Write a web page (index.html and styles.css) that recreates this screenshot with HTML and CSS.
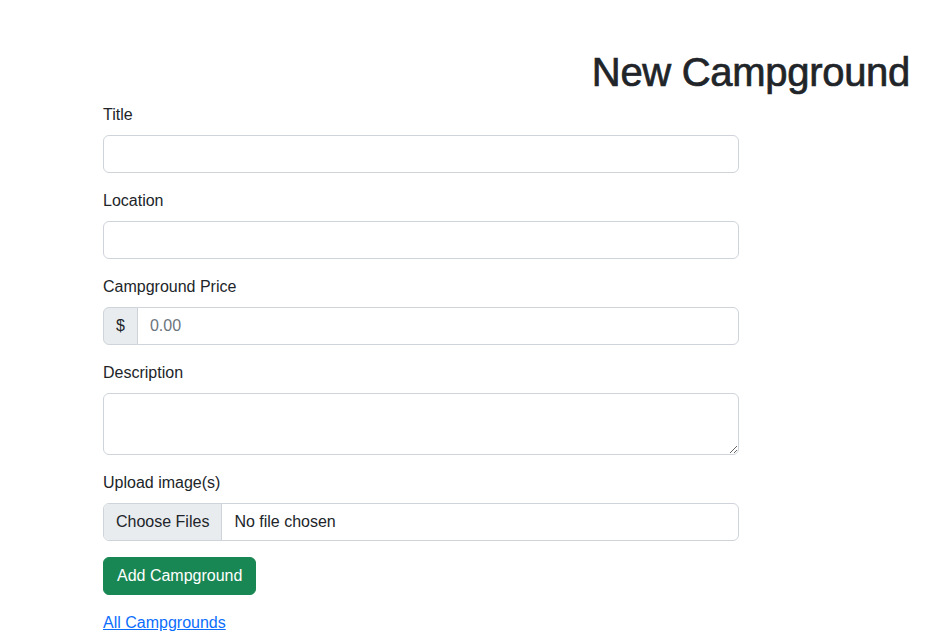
FILE: index.html
```html
<!DOCTYPE html>
<html lang="en">
<head>
<meta charset="utf-8">
<title>New Campground</title>
<link rel="stylesheet" href="styles.css">
</head>
<body>
<main class="page">
  <h1 class="page-title">New Campground</h1>
  <form class="camp-form">
    <div class="field">
      <label class="field-label" for="title">Title</label>
      <input class="control" type="text" id="title">
    </div>
    <div class="field">
      <label class="field-label" for="location">Location</label>
      <input class="control" type="text" id="location">
    </div>
    <div class="field">
      <label class="field-label" for="price">Campground Price</label>
      <div class="input-group">
        <span class="addon">$</span>
        <input class="control group-control" type="text" id="price" placeholder="0.00">
      </div>
    </div>
    <div class="field">
      <label class="field-label" for="description">Description</label>
      <textarea class="control textarea" id="description" rows="2"></textarea>
    </div>
    <div class="field">
      <label class="field-label" for="image">Upload image(s)</label>
      <label class="file-control" for="image">
        <span class="file-btn">Choose Files</span>
        <span class="file-name">No file chosen</span>
      </label>
    </div>
    <div class="actions">
      <button class="btn-success" type="button">Add Campground</button>
    </div>
  </form>
  <div class="back">
    <a class="back-link" href="#">All Campgrounds</a>
  </div>
</main>
</body>
</html>
```

FILE: styles.css
```css
* { box-sizing: border-box; }

html, body {
  margin: 0;
  padding: 0;
  background: #fff;
}

body {
  font-family: "Liberation Sans", Arial, sans-serif;
  font-size: 16px;
  line-height: 1.5;
  color: #212529;
}

.page {
  padding: 48px 24px 0 103px;
}

.page-title {
  margin: 0 0 7px;
  font-size: 40px;
  line-height: 48px;
  font-weight: 400;
  letter-spacing: -0.3px;
  -webkit-text-stroke: 0.7px #212529;
  text-align: right;
  color: #212529;
}

.camp-form {
  width: 636px;
}

.field {
  margin-bottom: 16px;
}

.field-label {
  display: block;
  margin-bottom: 8px;
  line-height: 24px;
}

.control {
  display: block;
  width: 100%;
  height: 38px;
  padding: 6px 12px;
  font-family: inherit;
  font-size: 16px;
  line-height: 24px;
  color: #212529;
  background: #fff;
  border: 1px solid #ced4da;
  border-radius: 6px;
  outline: none;
}

.control::placeholder {
  color: #6c757d;
  opacity: 1;
}

.textarea {
  height: 62px;
  min-height: 38px;
  resize: vertical;
}

.input-group {
  display: flex;
  width: 100%;
}

.addon {
  display: flex;
  align-items: center;
  padding: 6px 12px;
  height: 38px;
  background: #e9ecef;
  border: 1px solid #ced4da;
  border-radius: 6px 0 0 6px;
  line-height: 24px;
}

.group-control {
  flex: 1;
  width: auto;
  margin-left: -1px;
  border-radius: 0 6px 6px 0;
}

.file-control {
  display: flex;
  width: 100%;
  height: 38px;
  border: 1px solid #ced4da;
  border-radius: 6px;
  overflow: hidden;
  background: #fff;
  cursor: pointer;
}

.file-btn {
  display: flex;
  align-items: center;
  padding: 0 12px;
  background: #e9ecef;
  border-right: 1px solid #ced4da;
}

.file-name {
  display: flex;
  align-items: center;
  padding: 0 12px;
}

.actions {
  margin-bottom: 16px;
}

.btn-success {
  display: inline-block;
  height: 38px;
  padding: 6px 13px;
  font-family: inherit;
  font-size: 16px;
  line-height: 24px;
  color: #fff;
  background: #198754;
  border: 1px solid #198754;
  border-radius: 6px;
  cursor: pointer;
}

.back {
  line-height: 24px;
}

.back-link {
  color: #0d6efd;
  text-decoration: underline;
}
```
